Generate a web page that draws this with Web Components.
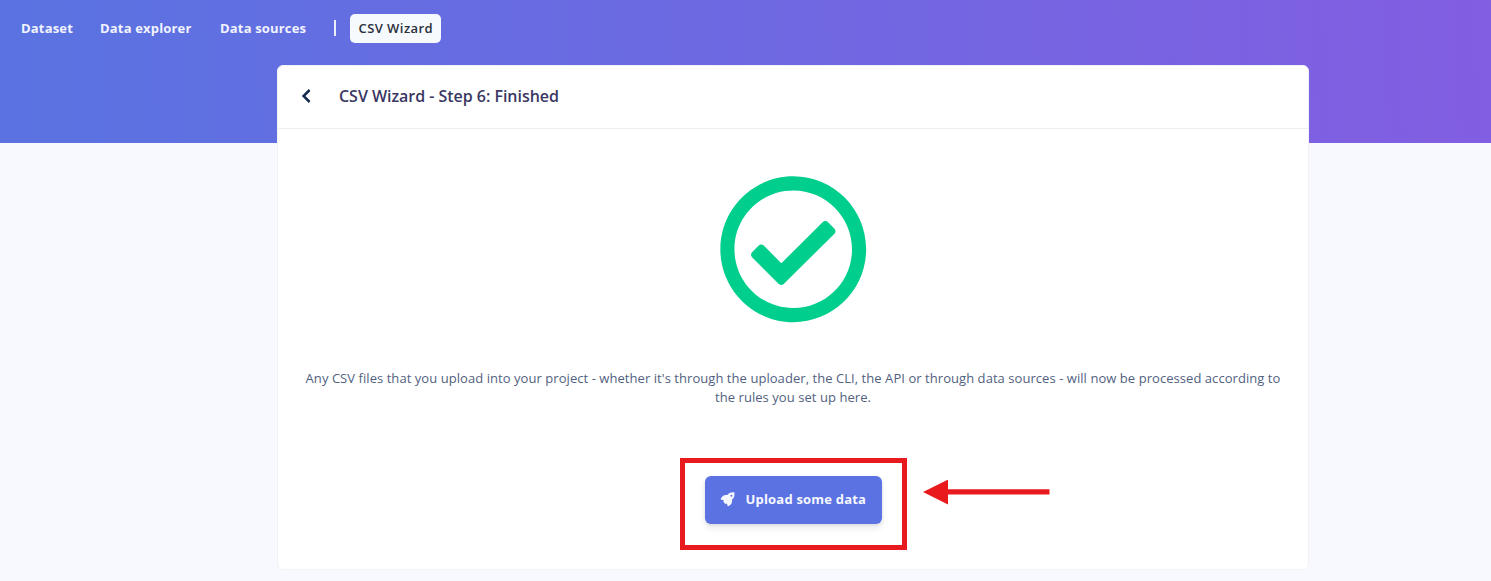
<!DOCTYPE html>
<html lang="en"><head><meta charset="utf-8"><title>CSV Wizard</title>
<style>html{background:#f8f9fe}body{margin:0;height:581px;overflow:hidden;font-family:"Open Sans",sans-serif;font-size:13px}</style></head>
<body><wizard-page></wizard-page>
<script>
const make=(name,html)=>customElements.define(name,class extends HTMLElement{
  constructor(){super();const t=document.createElement('template');t.innerHTML=html;
    this.attachShadow({mode:'open'}).append(t.content.cloneNode(true));}
});
make('nav-item',`<style>:host{display:block;font-weight:700;line-height:20px;color:#f1f3fe;white-space:nowrap;letter-spacing:.17px}
:host([active]){font-weight:600;color:#28303c;background:#f7fafc;border-radius:5px;padding:4px 8px 5px 8.5px;letter-spacing:.44px}</style><slot></slot>`);
make('top-nav',`<style>:host{display:flex;align-items:center;height:56px;padding-left:21px}
nav-item:nth-of-type(1){width:79px}nav-item:nth-of-type(2){width:120px}nav-item:nth-of-type(3){width:113.5px}
i{width:2px;height:16px;background:#eceffc;margin:0 14.5px 0 0}</style>
<nav-item>Dataset</nav-item><nav-item>Data explorer</nav-item><nav-item>Data sources</nav-item><i></i><nav-item active>CSV Wizard</nav-item>`);
make('card-header',`<style>:host{display:flex;align-items:center;box-sizing:border-box;height:63px;border-bottom:1px solid #eeeff2;padding:0 0 2px 22px;color:#3a3763}
svg{width:12px;height:16px;margin-right:27px}h3{margin:0;font-size:16px;line-height:24px;font-weight:600;letter-spacing:-.03px}</style>
<svg viewBox="0 0 12 16"><path d="M9.6 2 3.6 8l6 6" fill="none" stroke="#172b4d" stroke-width="2.5"/></svg><h3><slot></slot></h3>`);
make('success-icon',`<style>:host{display:block;width:150.5px;height:150px}svg{display:block;width:100%;height:150.5px;margin-top:-.4px}</style>
<svg viewBox="0 0 512 512"><path fill="#00ce8d" d="M256 8C119.033 8 8 119.033 8 256s111.033 248 248 248 248-111.033 248-248S392.967 8 256 8zm0 48c110.532 0 200 89.451 200 200 0 110.532-89.451 200-200 200-110.532 0-200-89.451-200-200 0-110.532 89.451-200 200-200m140.204 130.267l-22.536-22.718c-4.667-4.705-12.265-4.736-16.97-.068L215.346 303.697l-59.792-60.277c-4.667-4.705-12.265-4.736-16.97-.069l-22.719 22.536c-4.705 4.667-4.736 12.265-.068 16.971l90.781 91.516c4.667 4.705 12.265 4.736 16.97.068l172.589-171.204c4.704-4.668 4.734-12.266.067-16.971z"/></svg>`);
make('upload-button',`<style>:host{display:block;position:relative;width:177px}
button{display:flex;align-items:center;width:100%;height:48px;border:0;border-radius:6px;background:#5b72e2;color:#f7f8ff;font:700 13px/20px "Open Sans",sans-serif;letter-spacing:.2px;padding:0 0 2px 15px;white-space:nowrap;box-shadow:0 4px 6px rgba(50,50,93,.11),0 1px 3px rgba(0,0,0,.08)}
button svg{width:16px;height:16px;margin-right:10px;flex:none}
.frame{position:absolute;left:-25px;top:-18.4px;width:217.4px;height:82.7px;border:5px solid #e91a1d}
.arrow{position:absolute;left:218px;top:3.5px;width:127px;height:25px}</style>
<button><svg viewBox="0 0 16 16"><path fill="#f7f8ff" fill-rule="evenodd" d="M14.4 1.4C11.2 1.1 9.3 1.8 7.7 3.8L4.2 4.2C3.3 4.4.8 7 .8 7.9c0 .6.6.9 1.1.9l1.9.4-.5 1.6 2.1 2.1 1.6-.5.4 2c.1.6.7 1 1.2.7.9-.5 3.1-2.4 3.2-3.4l.4-3.4c2-1.5 2.5-3.7 2.2-6.9Zm-3 2.4a1 1 0 1 1 0 2 1 1 0 0 1 0-2Z"/></svg><slot></slot></button>
<div class="frame"></div><svg class="arrow" viewBox="0 0 127 25"><path fill="#e91a1d" d="M0 12 25-.4v9.7h101.5v5.2H25v10Z"/></svg>`);
make('wizard-card',`<style>:host{display:block;box-sizing:border-box;width:1032px;height:505px;margin:9px 0 0 277px;background:#fff;border:1px solid #f1f2f6;border-radius:6px}
main{display:flex;flex-direction:column;align-items:center;padding-top:45px}
p{margin:45px 0 69px;width:984px;text-align:center;line-height:19px;color:#525f7f;letter-spacing:.055px}</style>
<card-header>CSV Wizard - Step 6: Finished</card-header>
<main><success-icon></success-icon><p>Any CSV files that you upload into your project - whether it's through the uploader, the CLI, the API or through data sources - will now be processed according to the rules you set up here.</p><upload-button>Upload some data</upload-button></main>`);
make('wizard-page',`<style>:host{display:flow-root;height:581px;background:linear-gradient(87deg,#5a73e1,#825ee1) 0 0/100% 143px no-repeat,#f8f9fe}</style><top-nav></top-nav><wizard-card></wizard-card>`);
</script></body></html>
